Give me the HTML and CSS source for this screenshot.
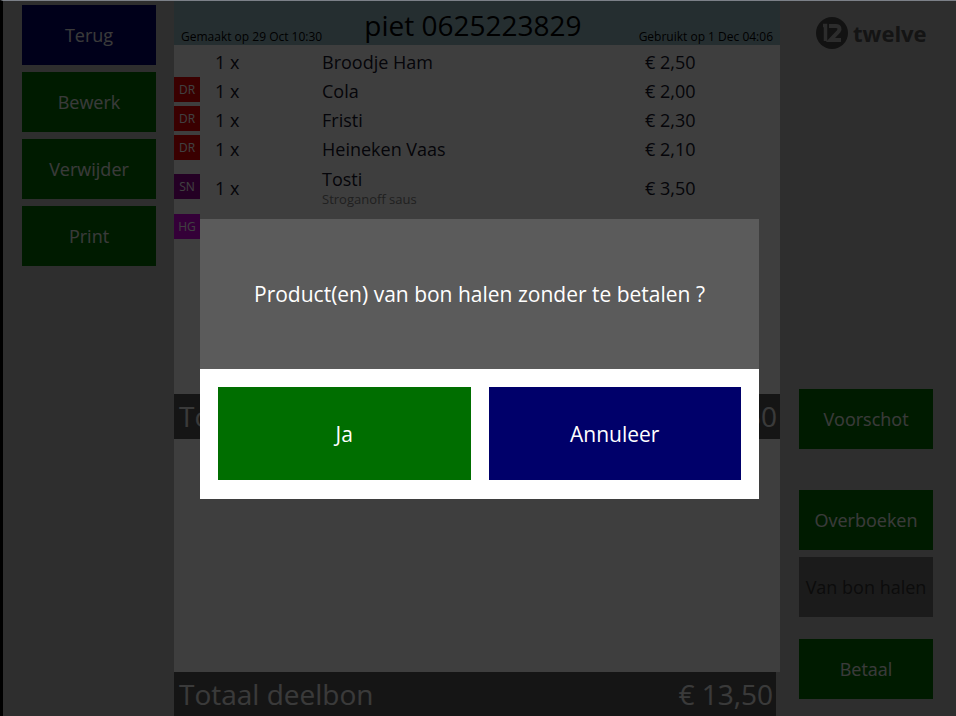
FILE: index.html
```html
<!DOCTYPE html>
<html lang="nl">
<head>
<meta charset="utf-8">
<title>Bon</title>
<link rel="stylesheet" href="styles.css">
</head>
<body>
<div class="screen">

<div class="side left">
<button type="button" class="btn blue">Terug</button>
<button type="button" class="btn">Bewerk</button>
<button type="button" class="btn">Verwijder</button>
<button type="button" class="btn">Print</button>
</div>

<div class="bon">
<div class="bonhead">
<span class="small">Gemaakt op 29 Oct 10:30</span>
<h1>piet 0625223829</h1>
<span class="small right">Gebruikt op 1 Dec 04:06</span>
</div>
<div class="list">
<table>
<tr><td class="tag"></td><td class="qty">1 x</td><td>Broodje Ham</td><td class="price">€ 2,50</td></tr>
<tr><td class="tag"><span class="dr">DR</span></td><td class="qty">1 x</td><td>Cola</td><td class="price">€ 2,00</td></tr>
<tr><td class="tag"><span class="dr">DR</span></td><td class="qty">1 x</td><td>Fristi</td><td class="price">€ 2,30</td></tr>
<tr><td class="tag"><span class="dr">DR</span></td><td class="qty">1 x</td><td>Heineken Vaas</td><td class="price">€ 2,10</td></tr>
<tr class="tall"><td class="tag"><span class="sn">SN</span></td><td class="qty">1 x</td><td>Tosti<div class="extra">Stroganoff saus</div></td><td class="price">€ 3,50</td></tr>
<tr><td class="tag"><span class="hg">HG</span></td><td class="qty"></td><td></td><td class="price"></td></tr>
</table>
</div>
<div class="total"><span>Totaal</span><span>€ 13,50</span></div>
<div class="list part"></div>
<div class="total deel"><span>Totaal deelbon</span><span>€ 13,50</span></div>
</div>

<div class="side rightside">
<div class="logo">
<svg width="34" height="34" viewBox="0 0 34 34">
<circle cx="17" cy="17" r="16" fill="#484848"/>
<path d="M8 9.500H10.500V25" fill="none" stroke="#b0b0b0" stroke-width="3.500"/>
<path d="M14 10H21C24.500 10 25.500 13 23.500 15.500L15.500 24H26" fill="none" stroke="#b0b0b0" stroke-width="4"/>
</svg>
<span>twelve</span>
</div>
<button type="button" class="btn voorschot">Voorschot</button>
<button type="button" class="btn">Overboeken</button>
<button type="button" class="btn" disabled>Van bon halen</button>
<button type="button" class="btn betaal">Betaal</button>
</div>

</div>

<div class="overlay">
<div class="dialog" role="dialog" aria-labelledby="vraag">
<p id="vraag">Product(en) van bon halen zonder te betalen ?</p>
<div class="choice">
<button type="button">Ja</button>
<button type="button" class="blue">Annuleer</button>
</div>
</div>
</div>
</body>
</html>
```

FILE: styles.css
```css
* {
  box-sizing: border-box;
}

body {
  margin: 0;
  height: 100vh;
  overflow: hidden;
  background-color: #b6b6b6;
  border-top: 1px solid #7c8088;
  border-left: 3px solid #000000;
  font-family: "Open Sans", "Noto Sans", sans-serif;
  font-size: 18px;
  color: #141428;
}

button {
  border: 0;
  padding: 0;
  font-family: inherit;
  color: #ffffff;
  background-color: #006e00;
}

button.blue {
  background-color: #00006a;
}

.screen {
  display: grid;
  grid-template-columns: 171px 1fr 176px;
  height: 100%;
}

/* button columns */
.side {
  display: flex;
  flex-direction: column;
  gap: 7px;
}

.left {
  padding: 4px 18px 0 19px;
}

.rightside {
  padding: 15px 23px 17px 19px;
}

.btn {
  height: 60px;
  font-size: 18px;
  line-height: 26px;
  white-space: nowrap;
  color: #e8e8e8;
}

.btn:disabled {
  background-color: #6c6c6c;
  color: #303030;
}

.voorschot {
  margin-top: auto;
  margin-bottom: 34px;
}

.betaal {
  margin-top: 15px;
}

.logo {
  display: flex;
  align-items: center;
  gap: 4px;
  padding-left: 16px;
  font-size: 22px;
  font-weight: bold;
  color: #505050;
}

.logo svg {
  flex: none;
}

/* receipt */
.bon {
  display: flex;
  flex-direction: column;
}

.bonhead {
  display: grid;
  grid-template-columns: 1fr auto 1fr;
  align-items: end;
  height: 44px;
  padding: 0 7px;
  background-color: #94b8c0;
  color: #000000;
}

.bonhead h1 {
  margin: 0;
  padding-right: 8px;
  font-size: 28px;
  font-weight: normal;
  line-height: 40px;
}

.small {
  font-size: 12px;
  line-height: 16px;
  white-space: nowrap;
}

.right {
  text-align: right;
}

.list {
  flex: 3 0 0;
  padding-top: 2px;
  background-color: #f6f6f6;
}

.part {
  flex: 2 0 0;
}

.list table {
  width: 100%;
  table-layout: fixed;
  border-collapse: collapse;
}

.list tr {
  height: 29px;
}

.list tr.tall {
  height: 50px;
}

.list td {
  padding: 0;
  line-height: 22px;
}

.list .tag {
  width: 41px;
}

.list .qty {
  width: 107px;
}

.list .price {
  width: 135px;
}

.tag span {
  display: block;
  width: 26px;
  height: 25px;
  margin-bottom: 3px;
  line-height: 25px;
  font-size: 12px;
  text-align: center;
  color: #ffffff;
}

.dr {
  background-color: #e80000;
}

.sn {
  background-color: #900090;
}

.hg {
  background-color: #d000e0;
}

.extra {
  font-size: 13px;
  line-height: 18px;
  color: #808080;
}

.total {
  display: flex;
  justify-content: space-between;
  height: 45px;
  padding: 0 3px 0 5px;
  background-color: #545454;
  color: #e8e8e8;
  font-size: 28px;
  line-height: 45px;
}

.deel {
  height: 44px;
  margin-right: 4px;
}

/* question on top of the screen */
.overlay {
  position: fixed;
  top: 1px;
  left: 3px;
  right: 0;
  bottom: 0;
  display: flex;
  align-items: center;
  justify-content: center;
  padding-top: 1px;
  background-color: rgba(0, 0, 0, 0.75);
}

.dialog {
  width: 559px;
  background-color: #ffffff;
}

.dialog p {
  margin: 0;
  padding: 60px 20px;
  line-height: 30px;
  font-size: 21px;
  text-align: center;
  color: #ffffff;
  background-color: #5b5b5b;
}

.choice {
  display: grid;
  grid-template-columns: 1fr 1fr;
  gap: 18px;
  padding: 18px 18px 19px;
}

.choice button {
  height: 93px;
  font-size: 21px;
}
```
